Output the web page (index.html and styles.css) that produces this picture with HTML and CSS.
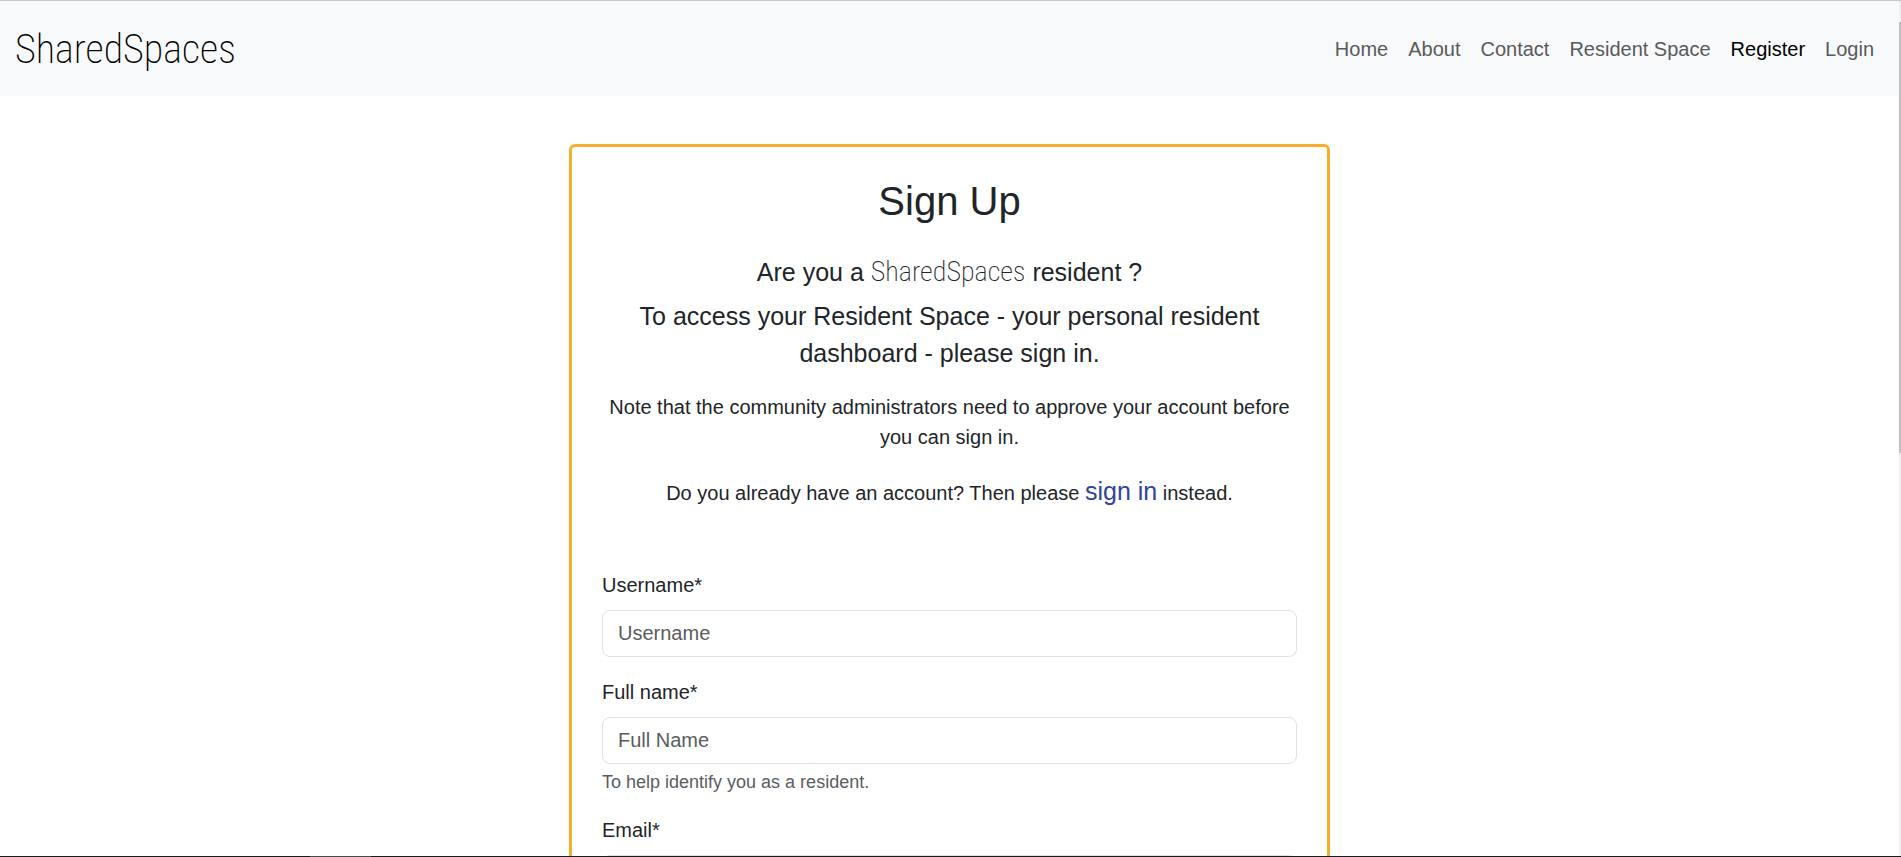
FILE: index.html
```
<!DOCTYPE html>
<html lang="en">
<head>
<meta charset="utf-8">
<meta name="viewport" content="width=device-width, initial-scale=1">
<title>SharedSpaces - Sign Up</title>
<link rel="stylesheet" href="styles.css">
</head>
<body>
<div class="shell">
  <div class="page">
    <header class="navbar">
      <a class="brand" href="#">SharedSpaces</a>
      <nav class="nav">
        <a class="nav-link" href="#">Home</a>
        <a class="nav-link" href="#">About</a>
        <a class="nav-link" href="#">Contact</a>
        <a class="nav-link" href="#">Resident Space</a>
        <a class="nav-link active" href="#" aria-current="page">Register</a>
        <a class="nav-link" href="#">Login</a>
      </nav>
    </header>
    <main class="content">
      <section class="card">
        <h1 class="title">Sign Up</h1>
        <p class="lead question">Are you a <span class="brand-inline">SharedSpaces</span> resident ?</p>
        <p class="lead">To access your Resident Space - your personal resident dashboard - please sign in.</p>
        <p class="note">Note that the community administrators need to approve your account before you can sign in.</p>
        <p class="signin">Do you already have an account? Then please <a class="signin-link" href="#">sign in</a> instead.</p>
        <form class="form">
          <div class="field">
            <label class="label" for="username">Username*</label>
            <input class="input" id="username" type="text" placeholder="Username">
          </div>
          <div class="field">
            <label class="label" for="fullname">Full name*</label>
            <input class="input" id="fullname" type="text" placeholder="Full Name">
            <small class="help">To help identify you as a resident.</small>
          </div>
          <div class="field">
            <label class="label" for="email">Email*</label>
            <input class="input" id="email" type="email">
          </div>
        </form>
      </section>
    </main>
  </div>
  <div class="scroll-rail"><div class="scroll-thumb"></div></div>
</div>
<div class="taskbar"><div class="taskbar-item"></div></div>
</body>
</html>
```
FILE: styles.css
```
* {
  box-sizing: border-box;
}

body {
  margin: 0;
  height: 100vh;
  display: flex;
  flex-direction: column;
  overflow: hidden;
  border-top: 1px solid #c8c9cb;
  background: #fff;
  color: #212529;
  font: 20px/30px "Liberation Sans", Arial, sans-serif;
}

h1,
p {
  margin: 0;
  font-weight: 400;
}

a {
  text-decoration: none;
}

.shell {
  flex: 1;
  min-height: 0;
  display: flex;
}

.page {
  flex: 1;
  min-width: 0;
  overflow: hidden;
}

.navbar {
  display: flex;
  align-items: center;
  justify-content: space-between;
  min-height: 95px;
  padding: 0 25px 0 15px;
  background: #f8f9fa;
}

.brand,
.brand-inline {
  font-family: "Roboto Condensed", Roboto, sans-serif;
  font-weight: 200;
}

.brand {
  padding-top: 2px;
  color: #000;
  font-size: 40px;
  line-height: 60px;
}

.nav {
  display: flex;
  gap: 20px;
}

.nav-link {
  color: #595a5b;
}

.nav-link.active {
  color: #000;
}

.content {
  padding: 48px 20px;
}

.card {
  max-width: 761px;
  margin: 0 auto;
  padding: 30px;
  border: 3px solid #f7ae2d;
  border-radius: 6px;
  text-align: center;
}

.title {
  margin-bottom: 29px;
  font-size: 40px;
  line-height: 48px;
}

.lead {
  margin-bottom: 20px;
  font-size: 25px;
  line-height: 37px;
}

.question {
  margin-bottom: 7px;
}

.brand-inline {
  font-size: 28px;
  line-height: 1;
}

.note {
  margin-bottom: 21px;
}

.signin {
  margin-bottom: 60px;
}

.signin-link {
  color: #31439d;
  font-size: 25px;
  line-height: 37px;
}

.form {
  display: flex;
  flex-direction: column;
  gap: 20px;
  text-align: left;
}

.field {
  display: flex;
  flex-direction: column;
}

.label {
  margin-bottom: 10px;
}

.input {
  width: 100%;
  height: 47px;
  padding: 0 15px;
  border: 1px solid #dee2e6;
  border-radius: 8px;
  background: #fff;
  color: #212529;
  font: inherit;
}

.input::placeholder {
  color: #595c5f;
  opacity: 1;
}

.help {
  margin-top: 5px;
  color: #5a5d61;
  font-size: 18px;
  line-height: 26px;
}

.scroll-rail {
  width: 2px;
  padding-top: 21px;
  background: #f1f1f1;
}

.scroll-thumb {
  height: 51.7%;
  background: #c1c1c1;
}

.taskbar {
  height: 1px;
  padding-left: 310px;
  background: #1c1c1e;
}

.taskbar-item {
  width: 61px;
  height: 1px;
  background: #4a4a4a;
}
```
